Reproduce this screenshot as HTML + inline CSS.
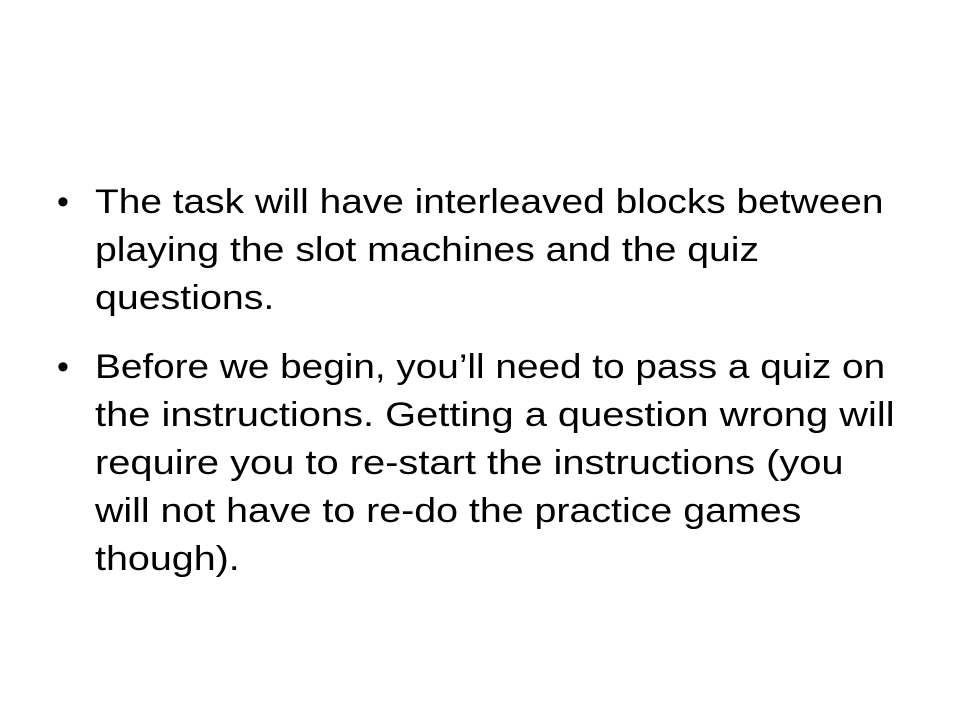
<!DOCTYPE html>
<html><head><style>
html,body{margin:0;padding:0;background:#fff;width:960px;height:720px;overflow:hidden}
body{font-family:"Liberation Sans",sans-serif;color:#000;position:relative}
.l{position:absolute;left:95px;font-size:34px;line-height:48px;white-space:nowrap;height:48px;transform-origin:0 0}
.b{position:absolute;left:57px;font-size:34px;line-height:48px}
</style></head><body>
<div class="b" style="top:178px">•</div>
<div class="l" style="top:178px;transform:scaleX(1.143)">The task will have interleaved blocks between</div>
<div class="l" style="top:226px;transform:scaleX(1.152)">playing the slot machines and the quiz</div>
<div class="l" style="top:274px;transform:scaleX(1.157)">questions.</div>
<div class="b" style="top:343px">•</div>
<div class="l" style="top:343px;transform:scaleX(1.139)">Before we begin, you’ll need to pass a quiz on</div>
<div class="l" style="top:391px;transform:scaleX(1.172)">the instructions. Getting a question wrong will</div>
<div class="l" style="top:439px;transform:scaleX(1.172)">require you to re-start the instructions (you</div>
<div class="l" style="top:487px;transform:scaleX(1.157)">will not have to re-do the practice games</div>
<div class="l" style="top:535px;transform:scaleX(1.16)">though).</div>
</body></html>
